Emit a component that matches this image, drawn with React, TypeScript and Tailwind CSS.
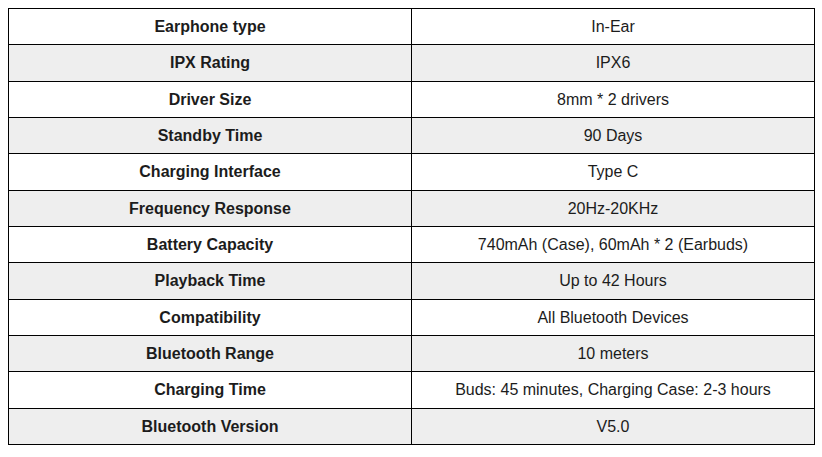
const rows: [string, string][] = [
  ['Earphone type', 'In-Ear'],
  ['IPX Rating', 'IPX6'],
  ['Driver Size', '8mm * 2 drivers'],
  ['Standby Time', '90 Days'],
  ['Charging Interface', 'Type C'],
  ['Frequency Response', '20Hz-20KHz'],
  ['Battery Capacity', '740mAh (Case), 60mAh * 2 (Earbuds)'],
  ['Playback Time', 'Up to 42 Hours'],
  ['Compatibility', 'All Bluetooth Devices'],
  ['Bluetooth Range', '10 meters'],
  ['Charging Time', 'Buds: 45 minutes, Charging Case: 2-3 hours'],
  ['Bluetooth Version', 'V5.0'],
];

export default function App() {
  return (
    <div className="w-[822px] h-[457px] bg-white pt-[8px] pl-[8px] font-['Liberation_Sans',Arial,sans-serif] text-[16px] text-[#1c1c1c]">
      <div className="grid grid-cols-[403px_403px] w-[807px] border-t border-l border-black">
        {rows.map(([k, v], i) => {
          const bg = i % 2 === 1 ? 'bg-[#eeeeee]' : 'bg-white';
          return [
            <div
              key={k + '-k'}
              className={`h-[36.34px] flex items-center justify-center pt-[1px] border-r border-b border-black font-bold ${bg}`}
            >
              {k}
            </div>,
            <div
              key={k + '-v'}
              className={`h-[36.34px] flex items-center justify-center pt-[1px] border-r border-b border-black ${bg}`}
            >
              {v}
            </div>,
          ];
        })}
      </div>
    </div>
  );
}
